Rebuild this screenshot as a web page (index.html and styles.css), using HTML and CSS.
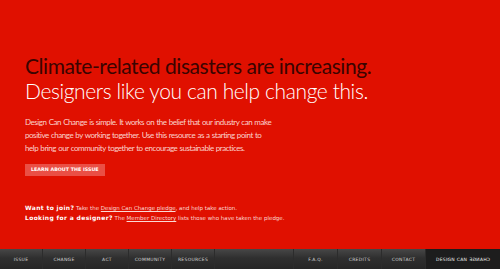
FILE: index.html
```html
<!DOCTYPE html>
<html lang="en">
<head>
    <meta charset="UTF-8">
    <title>Design Can Change</title>
    <link rel="stylesheet" href="styles.css">
</head>
<body>
    <div class="content">
        <h1 class="headline">
            <span class="dark">Climate-related disasters are increasing.</span>
            <span class="light">Designers like you can help change this.</span>
        </h1>

        <p class="intro">
            Design Can Change is simple. It works on the belief that our industry can make<br>
            positive change by working together. Use this resource as a starting point to<br>
            help bring our community together to encourage sustainable practices.
        </p>

        <a href="#" class="button">Learn about the issue</a>

        <div class="join">
            <p><strong>Want to join?</strong> Take the <a href="#">Design Can Change pledge</a>, and help take action.</p>
            <p><strong>Looking for a designer?</strong> The <a href="#">Member Directory</a> lists those who have taken the pledge.</p>
        </div>
    </div>

    <div class="footer">
        <ul class="nav">
            <li><a href="#">Issue</a></li>
            <li><a href="#">Change</a></li>
            <li><a href="#">Act</a></li>
            <li><a href="#">Community</a></li>
            <li><a href="#">Resources</a></li>
        </ul>
        <ul class="nav right">
            <li><a href="#">F.A.Q.</a></li>
            <li><a href="#">Credits</a></li>
            <li><a href="#">Contact</a></li>
            <li class="brand"><a href="#">Design Can <span class="flip">Change</span></a></li>
        </ul>
    </div>
</body>
</html>
```

FILE: styles.css
```css
* {
    margin: 0;
    padding: 0;
    box-sizing: border-box;
}

body {
    font-family: Lato, 'Open Sans', sans-serif;
    background: #e01000;
    height: 100vh;
    display: flex;
    flex-direction: column;
    overflow: hidden;
}

.content {
    flex: 1;
    padding: 53px 25px 0;
}

.headline {
    font-weight: normal;
    font-size: 21px;
    line-height: 25px;
    letter-spacing: -0.45px;
    margin-bottom: 13px;
}

.headline span {
    display: block;
}

.headline .dark {
    color: #3a0400;
}

.headline .light {
    color: #ffffff;
    font-weight: 300;
    letter-spacing: -0.4px;
}

.intro {
    color: #fbd2cc;
    font-size: 8px;
    line-height: 13px;
    letter-spacing: -0.45px;
    word-spacing: 0.5px;
    white-space: nowrap;
}

.button {
    display: inline-block;
    background: #ea4f45;
    color: #fff;
    text-decoration: none;
    text-transform: uppercase;
    font-family: 'DejaVu Sans', sans-serif;
    font-weight: bold;
    font-size: 4.8px;
    line-height: 6px;
    padding: 3px 6px;
    margin-bottom: 27px;
}

.join {
    color: #fbd9d4;
    font-family: 'DejaVu Sans', sans-serif;
    font-size: 5.5px;
    line-height: 10px;
    white-space: nowrap;
}

.join strong {
    color: #fff;
    font-weight: bold;
    font-size: 6px;
    letter-spacing: 0.35px;
}

.join a {
    color: #fbd9d4;
}

.footer {
    height: 20px;
    background: linear-gradient(#474747 0%, #2f2f2f 45%, #262626 100%);
    display: flex;
    justify-content: space-between;
}

.nav {
    list-style: none;
    display: flex;
}

.nav li {
    width: 43px;
    display: flex;
    align-items: center;
    justify-content: center;
    border-right: 1px solid #2c2c2c;
}

.nav.right li {
    width: 44px;
    border-right: none;
    border-left: 1px solid #2c2c2c;
}

.nav a {
    color: #d4d4d4;
    text-decoration: none;
    text-transform: uppercase;
    font-family: 'DejaVu Sans', sans-serif;
    font-size: 4.5px;
    letter-spacing: 0.3px;
    white-space: nowrap;
}

.nav.right .brand {
    width: 75px;
    background: #1d1d1d;
}

.nav .brand a {
    color: #f0f0f0;
}

.flip {
    display: inline-block;
    transform: scaleX(-1);
}
```
